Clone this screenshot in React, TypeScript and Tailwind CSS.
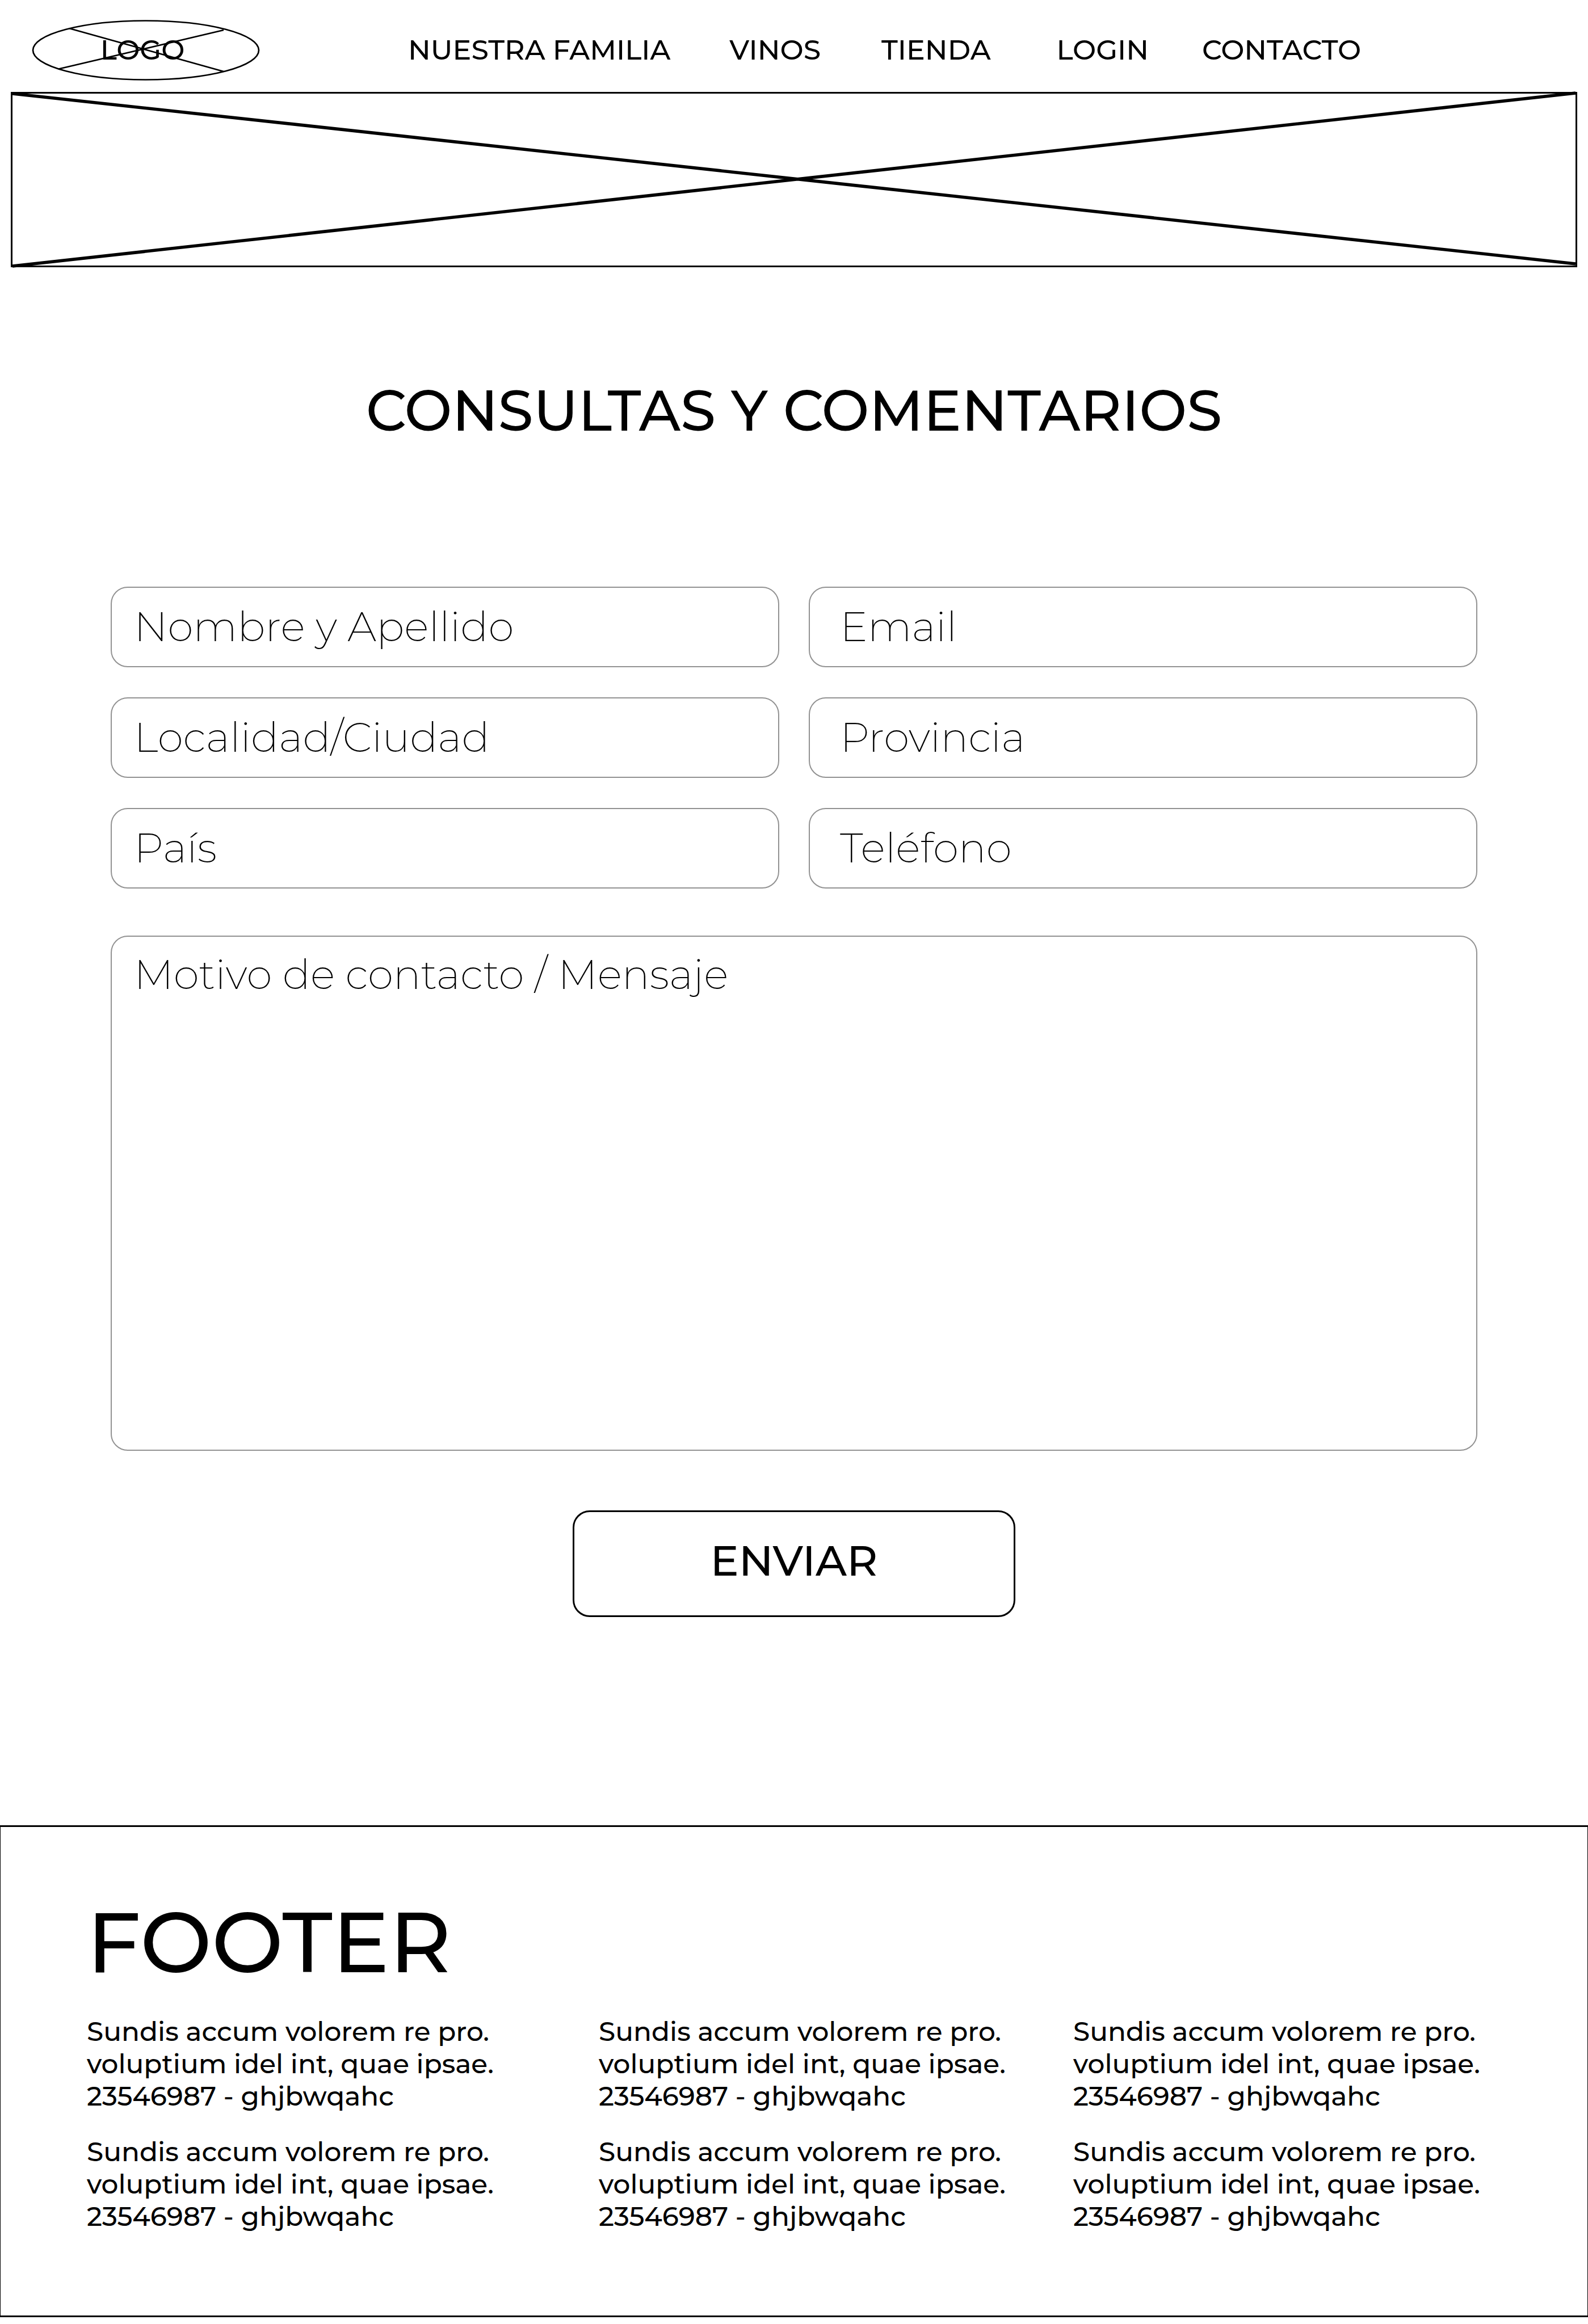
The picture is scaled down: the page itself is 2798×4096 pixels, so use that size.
import type { ReactNode } from "react";

const links = [
  { label: "NUESTRA FAMILIA", space: "" },
  { label: "VINOS", space: "ml-[104px]" },
  { label: "TIENDA", space: "ml-[107px]" },
  { label: "LOGIN", space: "ml-[116px]" },
  { label: "CONTACTO", space: "ml-[94px]" },
];

function Logo() {
  return (
    <a href="#inicio" className="grid shrink-0 place-items-center">
      <svg
        aria-hidden="true"
        viewBox="0 0 402 107"
        fill="none"
        stroke="#000"
        strokeWidth="2.7"
        className="col-start-1 row-start-1 h-[107px] w-[402px]"
      >
        <ellipse cx="201" cy="53.5" rx="199" ry="52" />
        <path d="M66 15 338 91M47.5 86.5 338 18" />
      </svg>
      <span className="col-start-1 row-start-1 pr-3 pb-0.5 text-[49px] leading-none">LOGO</span>
    </a>
  );
}

function Header() {
  return (
    <header className="flex items-center pt-[35px] pb-5 pl-14">
      <Logo />
      <nav aria-label="Principal" className="ml-[261px] flex items-center pb-0.5 text-[49px] leading-none whitespace-nowrap">
        {links.map(({ label, space }) => (
          <a key={label} href={"#" + label.toLowerCase().replace(" ", "-")} className={space}>
            {label}
          </a>
        ))}
      </nav>
    </header>
  );
}

function Banner() {
  return (
    <div role="img" aria-label="Banner" className="mx-[19px] h-[309px] border-3 border-black">
      <svg
        aria-hidden="true"
        viewBox="0 0 2756 303"
        preserveAspectRatio="none"
        stroke="#000"
        strokeWidth="5.6"
        className="block h-full w-full overflow-visible"
      >
        <path d="M0 0 2756 300M0 304 2756-1" />
      </svg>
    </div>
  );
}

const fieldBase =
  "w-full rounded-[30px] border-2 border-[#929292] bg-transparent text-[73px] font-extralight text-black outline-none placeholder:text-black placeholder:opacity-100";

function Field({ name, label, type = "text", indent }: { name: string; label: string; type?: string; indent: string }) {
  return (
    <input id={name} name={name} type={type} aria-label={label} placeholder={label} className={`${fieldBase} ${indent} h-[142px] pr-10 pb-1`} />
  );
}

function ContactForm() {
  const left = "pl-[39px]";
  const right = "pl-[53px]";
  return (
    <form className="mx-[195px] mt-[261px] flex flex-col" onSubmit={(e) => e.preventDefault()}>
      <div className="grid grid-cols-2 gap-x-[52px] gap-y-[53px]">
        <Field name="nombre" label="Nombre y Apellido" indent={left} />
        <Field name="email" label="Email" type="email" indent={right} />
        <Field name="localidad" label="Localidad/Ciudad" indent={left} />
        <Field name="provincia" label="Provincia" indent={right} />
        <Field name="pais" label="País" indent={left} />
        <Field name="telefono" label="Teléfono" type="tel" indent={right} />
      </div>
      <textarea
        id="mensaje"
        name="mensaje"
        aria-label="Motivo de contacto / Mensaje"
        placeholder="Motivo de contacto / Mensaje"
        className={`${fieldBase} mt-[83px] block h-[908px] resize-none pt-[21px] pr-10 pl-[39px] leading-[90px]`}
      />
      <button
        type="submit"
        className="mt-[105px] h-[188px] w-[780px] self-center rounded-[30px] border-3 border-black pb-3 text-[75px] leading-none font-medium"
      >
        ENVIAR
      </button>
    </form>
  );
}

function Note({ children }: { children: ReactNode }) {
  return <p className="whitespace-nowrap">{children}</p>;
}

function Footer() {
  return (
    <footer className="mt-[367px] border-x border-y-3 border-black pt-32 pb-[146px] pl-[152px]">
      <h2 className="text-[150px] leading-none">FOOTER</h2>
      <div className="mt-[54px] grid grid-cols-[902fr_836fr_906fr] gap-y-[41px] text-[47px] leading-[57px]">
        {Array.from({ length: 6 }, (_, i) => (
          <Note key={i}>
            Sundis accum volorem re pro.
            <br />
            voluptium idel int, quae ipsae.
            <br />
            23546987 - ghjbwqahc
          </Note>
        ))}
      </div>
    </footer>
  );
}

export default function App() {
  return (
    <div className="min-h-screen bg-white font-['Montserrat','Inter',sans-serif] font-medium text-black">
      <Header />
      <Banner />
      <main>
        <h1 className="mt-[202px] text-center text-[100px] leading-none">CONSULTAS Y COMENTARIOS</h1>
        <ContactForm />
      </main>
      <Footer />
    </div>
  );
}
